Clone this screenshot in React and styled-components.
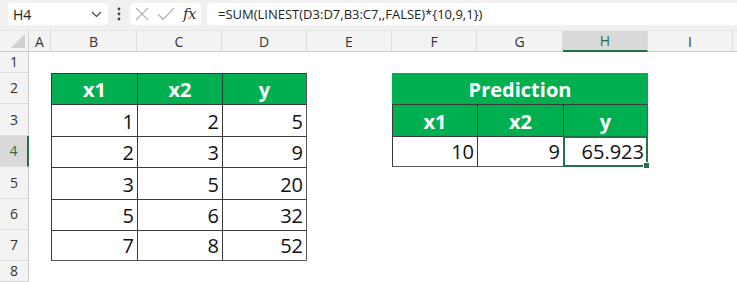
import React from "react";
import styled, { createGlobalStyle } from "styled-components";

const Global = createGlobalStyle`
  html, body { margin: 0; padding: 0; background: #ffffff; }
  body { width: 737px; height: 282px; overflow: hidden; font-family: "Open Sans", "Noto Sans", sans-serif; }
`;

const Page = styled.div`
  width: 737px;
  height: 282px;
  overflow: hidden;
  display: flex;
  flex-direction: column;
  background: #ffffff;
`;

const Toolbar = styled.div`
  height: 31px;
  box-sizing: border-box;
  display: flex;
  align-items: flex-start;
  padding: 3px 0 0 8px;
  background: #f0f0f0;
  border-bottom: 1px solid #e2e6e2;
`;

const Box = styled.div`
  height: 22px;
  box-sizing: border-box;
  background: #ffffff;
  border-radius: 4px;
  display: flex;
  align-items: center;
`;

const NameBox = styled(Box)`
  width: 100px;
  padding: 0 6px 0 5px;
  justify-content: space-between;
  font-size: 14px;
  color: #222;
`;

const Dots = styled.div`
  width: 22px;
  height: 22px;
  display: flex;
  align-items: center;
  justify-content: center;
`;

const IconBox = styled(Box)`
  width: 71px;
  padding: 0 4px 0 5px;
  justify-content: space-between;
`;

const FxText = styled.span`
  font-family: "DejaVu Serif", "Liberation Serif", serif;
  font-style: italic;
  font-size: 15px;
  color: #333;
  letter-spacing: -0.5px;
  padding-right: 1px;
`;

const FormulaBox = styled(Box)`
  flex: 1;
  margin-left: 6px;
  padding-left: 11px;
  font-size: 13px;
  color: #222;
  border-radius: 4px 0 0 4px;
  white-space: nowrap;
`;

const Sheet = styled.div`
  flex: 1;
  display: grid;
  grid-template-columns: 29px 22px 86px 85px 85px 85px 85px 86px 85px 85px 1fr;
  grid-template-rows: 21px 21px 31px 32px 31px 32px 31px 31px 1fr;
`;

const Corner = styled.div`
  background: #f3f3f3;
  border-right: 1px solid #d0d0d0;
  border-bottom: 1px solid #c8c8c8;
  box-sizing: border-box;
  display: flex;
  align-items: flex-end;
  justify-content: flex-end;
  padding: 0 3px 3px 0;
`;

const ColHeader = styled.div`
  box-sizing: border-box;
  background: ${(p) => (p.$selected ? "#d9d9d9" : "#f3f3f3")};
  border-right: 1px solid #dcdcdc;
  border-bottom: ${(p) => (p.$selected ? "2px solid #217346" : "1px solid #c8c8c8")};
  color: ${(p) => (p.$selected ? "#217346" : "#333")};
  font-size: 14px;
  display: flex;
  align-items: center;
  justify-content: center;
  line-height: 1;
  padding-top: 1px;
`;

const RowHeader = styled.div`
  box-sizing: border-box;
  background: ${(p) => (p.$selected ? "#d9d9d9" : "#f3f3f3")};
  border-right: ${(p) => (p.$selected ? "2px solid #217346" : "1px solid #c8c8c8")};
  border-bottom: 1px solid #dcdcdc;
  color: ${(p) => (p.$selected ? "#217346" : "#333")};
  font-size: 14px;
  display: flex;
  align-items: center;
  justify-content: center;
  line-height: 1;
`;

const Cell = styled.div`
  position: relative;
  box-sizing: border-box;
  grid-column: span ${(p) => p.$span || 1};
  background: ${(p) => (p.$head ? "#00b050" : "#ffffff")};
  color: ${(p) => (p.$head ? "#ffffff" : "#111")};
  font-weight: ${(p) => (p.$head ? 700 : 400)};
  font-size: 20px;
  line-height: 1;
  display: flex;
  align-items: flex-end;
  justify-content: ${(p) => (p.$head ? "center" : "flex-end")};
  padding: 0 3px 4px 3px;
  border-left: ${(p) => (p.$l ? "1px solid #3a3a3a" : "none")};
  border-top: ${(p) => (p.$t ? "1px solid #3a3a3a" : "none")};
  border-right: ${(p) => (p.$r ? "1px solid #5a5a5a" : "none")};
  border-bottom: ${(p) => (p.$b ? "1px solid #5a5a5a" : "none")};
  ${(p) =>
    p.$active &&
    `
    &::after {
      content: "";
      position: absolute;
      inset: -1px;
      border: 2px solid #217346;
      pointer-events: none;
    }
    &::before {
      content: "";
      position: absolute;
      right: -3px;
      bottom: -3px;
      width: 5px;
      height: 5px;
      background: #217346;
      border: 1px solid #ffffff;
      z-index: 2;
    }
  `}
`;

const cols = ["A", "B", "C", "D", "E", "F", "G", "H", "I", ""];

const table1 = [
  ["x1", "x2", "y"],
  [1, 2, 5],
  [2, 3, 9],
  [3, 5, 20],
  [5, 6, 32],
  [7, 8, 52],
];

function Chevron() {
  return (
    <svg width="11" height="7" viewBox="0 0 11 7">
      <path d="M1 1 L5.5 5.5 L10 1" fill="none" stroke="#444" strokeWidth="1.2" />
    </svg>
  );
}

function VDots() {
  return (
    <svg width="4" height="14" viewBox="0 0 4 14">
      <circle cx="2" cy="2" r="1.4" fill="#444" />
      <circle cx="2" cy="7" r="1.4" fill="#444" />
      <circle cx="2" cy="12" r="1.4" fill="#444" />
    </svg>
  );
}

function Cross() {
  return (
    <svg width="14" height="14" viewBox="0 0 14 14">
      <path d="M1 1 L13 13 M13 1 L1 13" stroke="#b4b4b4" strokeWidth="1.2" fill="none" />
    </svg>
  );
}

function Check() {
  return (
    <svg width="18" height="14" viewBox="0 0 18 14">
      <path d="M1 7 L6 12.5 L17 1" stroke="#b4b4b4" strokeWidth="1.2" fill="none" />
    </svg>
  );
}

function CornerTri() {
  return (
    <svg width="14" height="14" viewBox="0 0 14 14">
      <path d="M14 0 L14 14 L0 14 Z" fill="#cfcfcf" />
    </svg>
  );
}

function renderRow(r) {
  const cells = [];
  cells.push(<Cell key="A" />);
  for (let c = 0; c < 3; c++) {
    if (r >= 2 && r <= 7) {
      const v = table1[r - 2][c];
      cells.push(
        <Cell key={"t1" + c} $head={r === 2} $l $t $r={c === 2} $b={r === 7}>
          {v}
        </Cell>
      );
    } else {
      cells.push(<Cell key={"t1" + c} />);
    }
  }
  cells.push(<Cell key="E" />);
  if (r === 2) {
    cells.push(
      <Cell key="pred" $span={3} $head>
        Prediction
      </Cell>
    );
  } else if (r === 3) {
    ["x1", "x2", "y"].forEach((h, i) =>
      cells.push(
        <Cell key={"h" + i} $head $l $t $r={i === 2}>
          {h}
        </Cell>
      )
    );
  } else if (r === 4) {
    cells.push(
      <Cell key="f4" $l $t $b>
        10
      </Cell>
    );
    cells.push(
      <Cell key="g4" $l $t $b>
        9
      </Cell>
    );
    cells.push(
      <Cell key="h4" $l $t $r $b $active>
        65.923
      </Cell>
    );
  } else {
    cells.push(<Cell key="F" />, <Cell key="G" />, <Cell key="H" />);
  }
  cells.push(<Cell key="I" />, <Cell key="J" />);
  return cells;
}

export default function App() {
  return (
    <Page>
      <Global />
      <Toolbar>
        <NameBox>
          <span>H4</span>
          <Chevron />
        </NameBox>
        <Dots>
          <VDots />
        </Dots>
        <IconBox>
          <Cross />
          <Check />
          <FxText>fx</FxText>
        </IconBox>
        <FormulaBox>=SUM(LINEST(D3:D7,B3:C7,,FALSE)*{"{"}10,9,1{"}"})</FormulaBox>
      </Toolbar>
      <Sheet>
        <Corner>
          <CornerTri />
        </Corner>
        {cols.map((c) => (
          <ColHeader key={c || "J"} $selected={c === "H"}>
            {c}
          </ColHeader>
        ))}
        {[1, 2, 3, 4, 5, 6, 7, 8].map((r) => (
          <React.Fragment key={r}>
            <RowHeader $selected={r === 4}>{r}</RowHeader>
            {renderRow(r)}
          </React.Fragment>
        ))}
      </Sheet>
    </Page>
  );
}
